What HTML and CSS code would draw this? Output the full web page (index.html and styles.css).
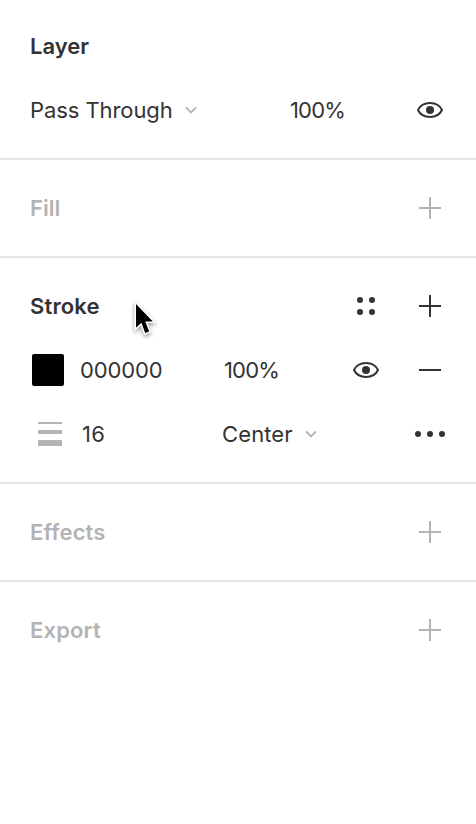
FILE: index.html
```html
<!DOCTYPE html>
<html lang="en">
<head>
<meta charset="utf-8">
<title>Properties</title>
<link rel="stylesheet" href="styles.css">
</head>
<body>
<svg class="defs" width="0" height="0">
  <symbol id="plus" viewBox="0 0 32 32"><path d="M16 5V27M5 16H27" fill="none" stroke="currentColor" stroke-width="2"/></symbol>
  <symbol id="minus" viewBox="0 0 32 32"><path d="M5 16H27" fill="none" stroke="currentColor" stroke-width="2"/></symbol>
  <symbol id="eye" viewBox="0 0 32 32"><path d="M4 16C6 11.8 10.4 9 16 9S26 11.8 28 16C26 20.2 21.6 23 16 23S6 20.2 4 16Z" fill="none" stroke="currentColor" stroke-width="2" stroke-linejoin="round"/><circle cx="16" cy="16" r="4" fill="currentColor"/></symbol>
  <symbol id="chevron" viewBox="0 0 12 8"><path d="M1 1.4L6 6.4L11 1.4" fill="none" stroke="currentColor" stroke-width="2"/></symbol>
</svg>
<main class="panel">
  <section class="section">
    <header class="row"><h2 class="title">Layer</h2></header>
    <div class="row">
      <span class="label blend">Pass Through</span>
      <svg class="chevron"><use href="#chevron"/></svg>
      <span class="label percent layer-opacity">100%</span>
      <svg class="icon end"><use href="#eye"/></svg>
    </div>
  </section>
  <section class="section muted">
    <header class="row"><h2 class="title">Fill</h2><svg class="icon end"><use href="#plus"/></svg></header>
  </section>
  <section class="section">
    <header class="row">
      <h2 class="title wide">Stroke</h2>
      <svg class="icon end" viewBox="0 0 32 32"><g fill="currentColor"><circle cx="10" cy="10" r="3"/><circle cx="22" cy="10" r="3"/><circle cx="10" cy="22" r="3"/><circle cx="22" cy="22" r="3"/></g></svg>
      <svg class="icon next"><use href="#plus"/></svg>
    </header>
    <div class="row">
      <span class="swatch"></span>
      <span class="label hex">000000</span>
      <span class="label percent">100%</span>
      <svg class="icon end"><use href="#eye"/></svg>
      <svg class="icon next"><use href="#minus"/></svg>
    </div>
    <div class="row">
      <svg class="weight-icon" viewBox="0 0 24 24"><path d="M0 0H24V2H0ZM0 8H24V12H0ZM0 18H24V24H0Z" fill="currentColor"/></svg>
      <span class="label weight">16</span>
      <span class="label align">Center</span>
      <svg class="chevron"><use href="#chevron"/></svg>
      <svg class="icon end" viewBox="0 0 32 32"><g fill="currentColor"><circle cx="4" cy="16" r="3"/><circle cx="16" cy="16" r="3"/><circle cx="28" cy="16" r="3"/></g></svg>
    </div>
  </section>
  <section class="section muted">
    <header class="row"><h2 class="title wide">Effects</h2><svg class="icon end"><use href="#plus"/></svg></header>
  </section>
  <section class="section muted">
    <header class="row"><h2 class="title wide">Export</h2><svg class="icon end"><use href="#plus"/></svg></header>
  </section>
</main>
<svg class="cursor" viewBox="0 0 30 42"><path d="M6 4V27.8L11.4 22.8L15.2 33L19.2 31.4L15.2 21.4H22.8Z" fill="#000" stroke="#fff" stroke-width="3" paint-order="stroke"/></svg>
</body>
</html>
```

FILE: styles.css
```css
* { box-sizing: border-box; }
body {
  margin: 0;
  background: #fff;
  color: #333;
  font: 400 22px/32px Inter, "Liberation Sans", sans-serif;
}
.defs { position: absolute; }
.section { padding: 16px 0; border-bottom: 2px solid #e5e5e5; }
.section:first-child { padding-top: 14px; }
.section:last-child { border-bottom: 0; }
.row { display: flex; align-items: center; height: 64px; padding: 0 30px; }
.title { margin: 0; font-size: 22px; font-weight: 600; line-height: 32px; }
.title.wide { letter-spacing: .16px; }
.muted { color: #b3b3b3; }
.label { white-space: nowrap; flex: none; }
.icon { width: 32px; height: 32px; flex: none; }
.end { margin-left: auto; }
.next { margin-left: 32px; }
.chevron { width: 12px; height: 8px; color: #b3b3b3; flex: none; }
.blend { width: 155px; letter-spacing: -.08px; }
.percent { letter-spacing: -.85px; }
.layer-opacity { margin-left: 93px; }
.swatch { width: 32px; height: 32px; margin-left: 2px; background: #000; border-radius: 2px; }
.hex { width: 144px; margin-left: 16px; letter-spacing: -.15px; }
.weight-icon { width: 24px; height: 24px; margin-left: 8px; color: #b3b3b3; }
.weight { width: 140px; margin-left: 20px; letter-spacing: .3px; }
.align { width: 83px; letter-spacing: .12px; }
.cursor {
  position: absolute;
  left: 130px;
  top: 300px;
  width: 30px;
  height: 42px;
  filter: drop-shadow(0 2px 2px rgba(0, 0, 0, .4));
}
```
